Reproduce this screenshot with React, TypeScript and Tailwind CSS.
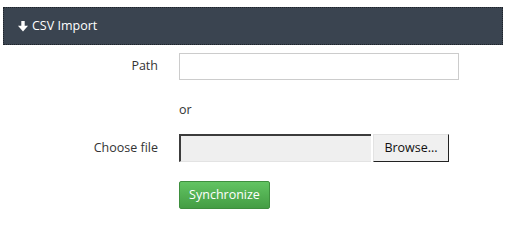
import React from "react"

const font = { fontFamily: '"Open Sans", "Noto Sans", sans-serif' }

function ArrowDown() {
  return (
    <svg viewBox="0 0 10 11" className="w-[10px] h-[11px] mr-[4px]" fill="white">
      <rect x="3.3" y="0" width="3.4" height="6" />
      <polygon points="0,4.8 10,4.8 5,10.5" />
    </svg>
  )
}

export default function App() {
  return (
    <div className="w-[508px] h-[242px] bg-white text-[13px] text-[#333]" style={font}>
      <div className="pt-[7px] pl-[3px]">
        <div className="w-[500px] h-[38px] bg-[#3a4450] border border-dotted border-[#1f242b] flex items-center pl-[14px] text-white">
          <ArrowDown />
          <span className="text-[12.5px]">CSV Import</span>
        </div>
      </div>

      <div className="mt-[8px] grid grid-cols-[158px_1fr] gap-x-[21px] items-center">
        <label className="text-right text-[12.5px]">Path</label>
        <input className="w-[280px] h-[27px] border border-[#cccccc] bg-white outline-none" />

        <div className="h-[54px]" />
        <span className="text-[12.5px] mt-[6px]">or</span>

        <label className="text-right text-[12.5px]">Choose file</label>
        <div className="flex items-stretch h-[28px]">
          <div className="w-[192px] bg-[#efefef] border-t-2 border-l-2 border-t-[#3c3c3c] border-l-[#3c3c3c] border-b border-b-[#e3e3e3]" />
          <button className="ml-[2px] w-[76px] bg-[#f0f0f0] border border-t-[#e3e3e3] border-l-[#e3e3e3] border-r-[#222] border-b-[#222] text-[12.5px] text-[#111]">
            Browse...
          </button>
        </div>

        <div className="h-[19px]" />
        <div />

        <div />
        <button className="w-[91px] h-[28px] rounded-[2px] border border-[#3e8f3e] bg-gradient-to-b from-[#62c462] to-[#449d44] text-white text-[12.5px]">
          Synchronize
        </button>
      </div>
    </div>
  )
}
